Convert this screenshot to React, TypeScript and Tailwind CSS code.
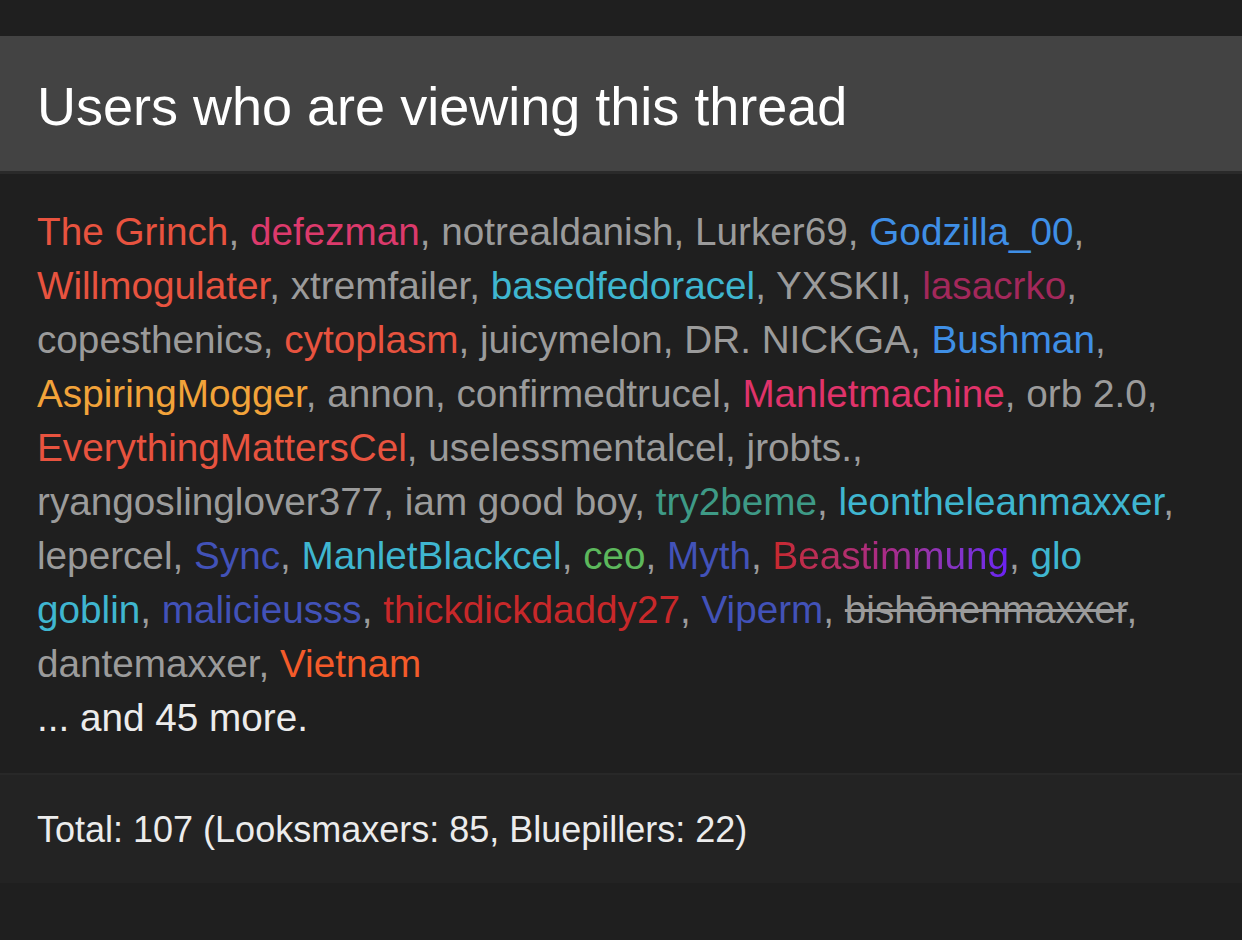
import React from "react";

type User = { name: string; color?: string; strike?: boolean; gradient?: boolean };

const USERS: User[] = [
  { name: "The Grinch", color: "text-[#e8533f]" },
  { name: "defezman", color: "text-[#dc3a6c]" },
  { name: "notrealdanish" },
  { name: "Lurker69" },
  { name: "Godzilla_00", color: "text-[#3f8fe6]" },
  { name: "Willmogulater", color: "text-[#e8533f]" },
  { name: "xtremfailer" },
  { name: "basedfedoracel", color: "text-[#3fb6d0]" },
  { name: "YXSKII" },
  { name: "lasacrko", color: "text-[#a3285b]" },
  { name: "copesthenics" },
  { name: "cytoplasm", color: "text-[#e8533f]" },
  { name: "juicymelon" },
  { name: "DR. NICKGA" },
  { name: "Bushman", color: "text-[#3f8fe6]" },
  { name: "AspiringMogger", color: "text-[#f2a33a]" },
  { name: "annon" },
  { name: "confirmedtrucel" },
  { name: "Manletmachine", color: "text-[#e0336a]" },
  { name: "orb 2.0" },
  { name: "EverythingMattersCel", color: "text-[#e8533f]" },
  { name: "uselessmentalcel" },
  { name: "jrobts." },
  { name: "ryangoslinglover377" },
  { name: "iam good boy" },
  { name: "try2beme", color: "text-[#3e9a86]" },
  { name: "leontheleanmaxxer", color: "text-[#3fb6d0]" },
  { name: "lepercel" },
  { name: "Sync", color: "text-[#4252b8]" },
  { name: "ManletBlackcel", color: "text-[#3fb6d0]" },
  { name: "ceo", color: "text-[#5cb85c]" },
  { name: "Myth", color: "text-[#4252b8]" },
  { name: "Beastimmung", gradient: true },
  { name: "glo goblin", color: "text-[#3fb6d0]" },
  { name: "malicieusss", color: "text-[#4252b8]" },
  { name: "thickdickdaddy27", color: "text-[#c8282a]" },
  { name: "Viperm", color: "text-[#4252b8]" },
  { name: "bishōnenmaxxer", strike: true },
  { name: "dantemaxxer" },
  { name: "Vietnam", color: "text-[#f45b2a]" },
];

function UserName({ user }: { user: User }) {
  if (user.gradient) {
    return (
      <span className="bg-gradient-to-r from-[#c8282a] via-[#a82a8a] to-[#6a1ff5] bg-clip-text text-transparent">
        {user.name}
      </span>
    );
  }
  return (
    <span className={`${user.color ?? "text-[#9b9b9b]"} ${user.strike ? "line-through" : ""}`}>
      {user.name}
    </span>
  );
}

export default function App() {
  return (
    <div className="min-h-[940px] w-full bg-[#1f1f1f] pt-[36px] font-['Liberation_Sans',Arial,sans-serif]">
      <div className="h-[135px] bg-[#434343] px-[37px] pt-[70px]">
        <h2 className="text-[54px] leading-[0] text-white">Users who are viewing this thread</h2>
      </div>
      <div className="border-t-[3px] border-[#2a2a2a] bg-[#1f1f1f] px-[37px] pb-[28px] pt-[31px]">
        <div className="text-[38.7px] leading-[54px] text-[#9b9b9b]">
          {USERS.map((u, i) => (
            <React.Fragment key={u.name}>
              <UserName user={u} />
              {i < USERS.length - 1 ? ", " : ""}
            </React.Fragment>
          ))}
        </div>
        <div className="text-[38.7px] leading-[54px] text-[#ececec]">... and 45 more.</div>
      </div>
      <div className="h-[110px] border-t-[2px] border-[#282828] bg-[#232323] px-[37px] pt-[31px]">
        <div className="text-[36px] leading-[48px] text-[#ececec]">
          Total: 107 (Looksmaxers: 85, Bluepillers: 22)
        </div>
      </div>
    </div>
  );
}
